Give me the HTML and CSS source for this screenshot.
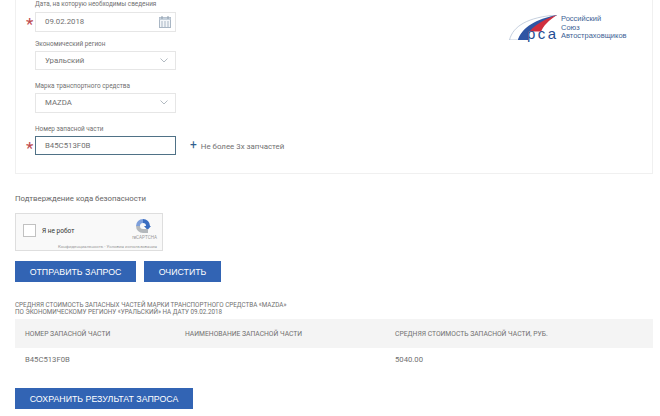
FILE: index.html
```html
<!DOCTYPE html>
<html lang="ru">
<head>
    <meta charset="UTF-8">
    <title>Средняя стоимость запасных частей</title>
    <link rel="stylesheet" href="styles.css">
</head>
<body>

<section class="form-card">
    <div class="fields">
        <div class="form-group first">
            <label>Дата, на которую необходимы сведения</label>
            <div class="control required">
                <span class="value">09.02.2018</span>
                <svg class="cal-icon" width="12" height="12" viewBox="0 0 12 12">
                    <rect x="0.5" y="1.5" width="11" height="10" fill="#f3f6f9" stroke="#a9b6c4"/>
                    <rect x="0.5" y="1.5" width="11" height="2.5" fill="#c5d0db"/>
                    <path d="M3 0v3M9 0v3" stroke="#8d9cab"/>
                    <path d="M2 6h2M5 6h2M8 6h2M2 8h2M5 8h2M8 8h2M2 10h2M5 10h2M8 10h2" stroke="#a9b6c4"/>
                </svg>
            </div>
        </div>
        <div class="form-group">
            <label>Экономический регион</label>
            <div class="control">
                <span class="value">Уральский</span>
                <svg class="chevron" width="8" height="5" viewBox="0 0 8 5"><path d="M0.5 0.5l3.5 3.5 3.5-3.5" fill="none" stroke="#b3bbc2"/></svg>
            </div>
        </div>
        <div class="form-group">
            <label>Марка транспортного средства</label>
            <div class="control">
                <span class="value">MAZDA</span>
                <svg class="chevron" width="8" height="5" viewBox="0 0 8 5"><path d="M0.5 0.5l3.5 3.5 3.5-3.5" fill="none" stroke="#b3bbc2"/></svg>
            </div>
        </div>
        <div class="form-group">
            <label>Номер запасной части</label>
            <div class="part-row">
                <div class="control required focused">
                    <span class="value">B45C513F0B</span>
                </div>
                <span class="add-part"><span class="plus">+</span> Не более 3х запчастей</span>
            </div>
        </div>
    </div>
    <div class="logo">
        <svg width="48" height="25" viewBox="0 0 48 25">
            <path d="M0.5 25C4 11 19 2 48 0C30 5 22 13 20 25Z" fill="#fff" stroke="#9fb0c8" stroke-width="0.6"/>
            <path d="M9 25C13 12 27 4 48 0C36 5 29 12 26 17H20L18 25Z" fill="#2f55a4"/>
            <path d="M16 25C19 14 32 5 48 0C40 5 34 11 32 17H24L22 25Z" fill="#cf2e3e"/>
            <rect x="19" y="16.5" width="29" height="8.5" fill="#fff"/>
            <path d="M9 25C10 22 12 19 14 17H19V25Z" fill="#2f55a4"/>
        </svg>
        <span class="logo-mark">рса</span>
        <span class="logo-text">Российский<br>Союз<br>Автостраховщиков</span>
    </div>
</section>

<p class="captcha-title">Подтверждение кода безопасности</p>
<div class="captcha">
    <span class="captcha-box"></span>
    <span class="captcha-label">Я не робот</span>
    <svg class="captcha-icon" width="16" height="16" viewBox="0 0 16 16">
        <path d="M3 8a5 5 0 0 1 5-5" fill="none" stroke="#7d9fdb" stroke-width="4"/>
        <path d="M8 3a5 5 0 0 1 5 5" fill="none" stroke="#3a6dc0" stroke-width="4"/>
        <path d="M13 8H16L12.5 12L9 8Z" fill="#3a6dc0"/>
        <path d="M3 8a5 5 0 0 0 5 5h5" fill="none" stroke="#b4b8bc" stroke-width="4"/>
    </svg>
    <span class="captcha-brand">reCAPTCHA</span>
    <span class="captcha-links">Конфиденциальность - Условия использования</span>
</div>

<div class="buttons">
    <button class="btn btn-send">ОТПРАВИТЬ ЗАПРОС</button>
    <button class="btn btn-clear">ОЧИСТИТЬ</button>
</div>

<p class="result-title">СРЕДНЯЯ СТОИМОСТЬ ЗАПАСНЫХ ЧАСТЕЙ МАРКИ ТРАНСПОРТНОГО СРЕДСТВА «MAZDA»<br>ПО ЭКОНОМИЧЕСКОМУ РЕГИОНУ «УРАЛЬСКИЙ» НА ДАТУ 09.02.2018</p>

<table class="result-table">
    <thead>
        <tr>
            <th class="col-number">НОМЕР ЗАПАСНОЙ ЧАСТИ</th>
            <th class="col-name">НАИМЕНОВАНИЕ ЗАПАСНОЙ ЧАСТИ</th>
            <th>СРЕДНЯЯ СТОИМОСТЬ ЗАПАСНОЙ ЧАСТИ, РУБ.</th>
        </tr>
    </thead>
    <tbody>
        <tr>
            <td>B45C513F0B</td>
            <td></td>
            <td>5040.00</td>
        </tr>
    </tbody>
</table>

<button class="btn btn-save">СОХРАНИТЬ РЕЗУЛЬТАТ ЗАПРОСА</button>

</body>
</html>
```

FILE: styles.css
```css
html, body {
    height: 416px;
    overflow: hidden;
}
body {
    font-family: Roboto, Arial, sans-serif;
    margin: 0;
    padding: 0 7px 0 15px;
    background-color: #fff;
    color: #666;
}
.form-card {
    display: flex;
    justify-content: space-between;
    height: 174px;
    box-sizing: border-box;
    padding: 0 19px 0 19px;
    border: 1px solid #f0f0f0;
    border-top: none;
}
.fields {
    display: flex;
    flex-direction: column;
}
.form-group {
    height: 42.5px;
}
.form-group.first {
    height: 39.5px;
}
.form-group label {
    display: block;
    height: 11px;
    font-size: 6.4px;
    line-height: 9px;
    color: #707070;
}
.form-group.first label {
    height: 12px;
}
.control {
    position: relative;
    display: flex;
    align-items: center;
    justify-content: space-between;
    box-sizing: border-box;
    width: 141px;
    height: 19.5px;
    padding: 0 4px 0 9px;
    border: 1px solid #e6e6e6;
}
.required::before {
    content: "*";
    position: absolute;
    left: -10px;
    top: 1px;
    font-size: 17px;
    line-height: 20px;
    color: #bd4a4f;
}
.focused {
    border-color: #4f7186;
}
.chevron {
    margin-right: 3px;
}
.value {
    font-size: 7.8px;
    color: #707070;
}
.part-row {
    display: flex;
    align-items: center;
    gap: 14px;
}
.add-part {
    font-size: 7.9px;
    color: #707070;
}
.plus {
    font-size: 12px;
    line-height: 10px;
    color: #2f5f8f;
    margin-right: 2px;
}
.logo {
    position: relative;
    width: 124px;
    height: 25px;
    margin-top: 15px;
}
.logo svg {
    display: block;
}
.logo-mark {
    position: absolute;
    left: 18px;
    top: 11px;
    font-family: "Liberation Sans", Arial, sans-serif;
    font-size: 15px;
    line-height: 15px;
    letter-spacing: 2.5px;
    color: #1f4d94;
}
.logo-text {
    position: absolute;
    left: 52px;
    top: 0;
    font-family: "Liberation Sans", Arial, sans-serif;
    font-size: 7.5px;
    line-height: 8.5px;
    color: #3d5f95;
}
.captcha-title {
    margin: 19px 0 0;
    font-size: 7.8px;
    line-height: 11px;
    color: #666;
}
.captcha {
    position: relative;
    box-sizing: border-box;
    width: 148px;
    height: 38px;
    margin-top: 9px;
    border: 1px solid #dedede;
    background-color: #f9f9f9;
}
.captcha-box {
    position: absolute;
    left: 7px;
    top: 10px;
    width: 11px;
    height: 11px;
    border: 1px solid #c1c1c1;
    background-color: #fff;
}
.captcha-label {
    position: absolute;
    left: 26px;
    top: 13px;
    font-size: 6.5px;
    color: #333;
}
.captcha-icon {
    position: absolute;
    right: 11px;
    top: 4px;
}
.captcha-brand {
    position: absolute;
    right: 5px;
    top: 21px;
    font-size: 4.6px;
    color: #999;
}
.captcha-links {
    position: absolute;
    right: 5px;
    bottom: 1px;
    font-size: 4.4px;
    color: #999;
    white-space: nowrap;
}
.buttons {
    display: flex;
    gap: 8px;
    margin-top: 10px;
}
.btn {
    height: 21px;
    padding: 0;
    border: none;
    background-color: #3264b4;
    color: #fff;
    font-family: "Liberation Sans", Arial, sans-serif;
    font-size: 8.8px;
}
.btn-send {
    width: 121px;
}
.btn-clear {
    width: 77px;
}
.result-title {
    margin: 20px 0 0;
    font-size: 6.3px;
    line-height: 7px;
    color: #707070;
}
.result-table {
    width: 638px;
    margin-top: 3px;
    border-collapse: collapse;
    font-size: 6.75px;
}
.result-table th {
    height: 29px;
    padding: 0 0 0 10px;
    background-color: #f4f4f4;
    font-weight: 400;
    text-align: left;
    color: #707070;
}
.result-table td {
    height: 23px;
    padding: 0 0 2px 10px;
    font-size: 7.7px;
    color: #707070;
}
.col-number {
    width: 150px;
}
.col-name {
    width: 200px;
}
.btn-save {
    display: block;
    width: 178px;
    margin-top: 15px;
}
```
